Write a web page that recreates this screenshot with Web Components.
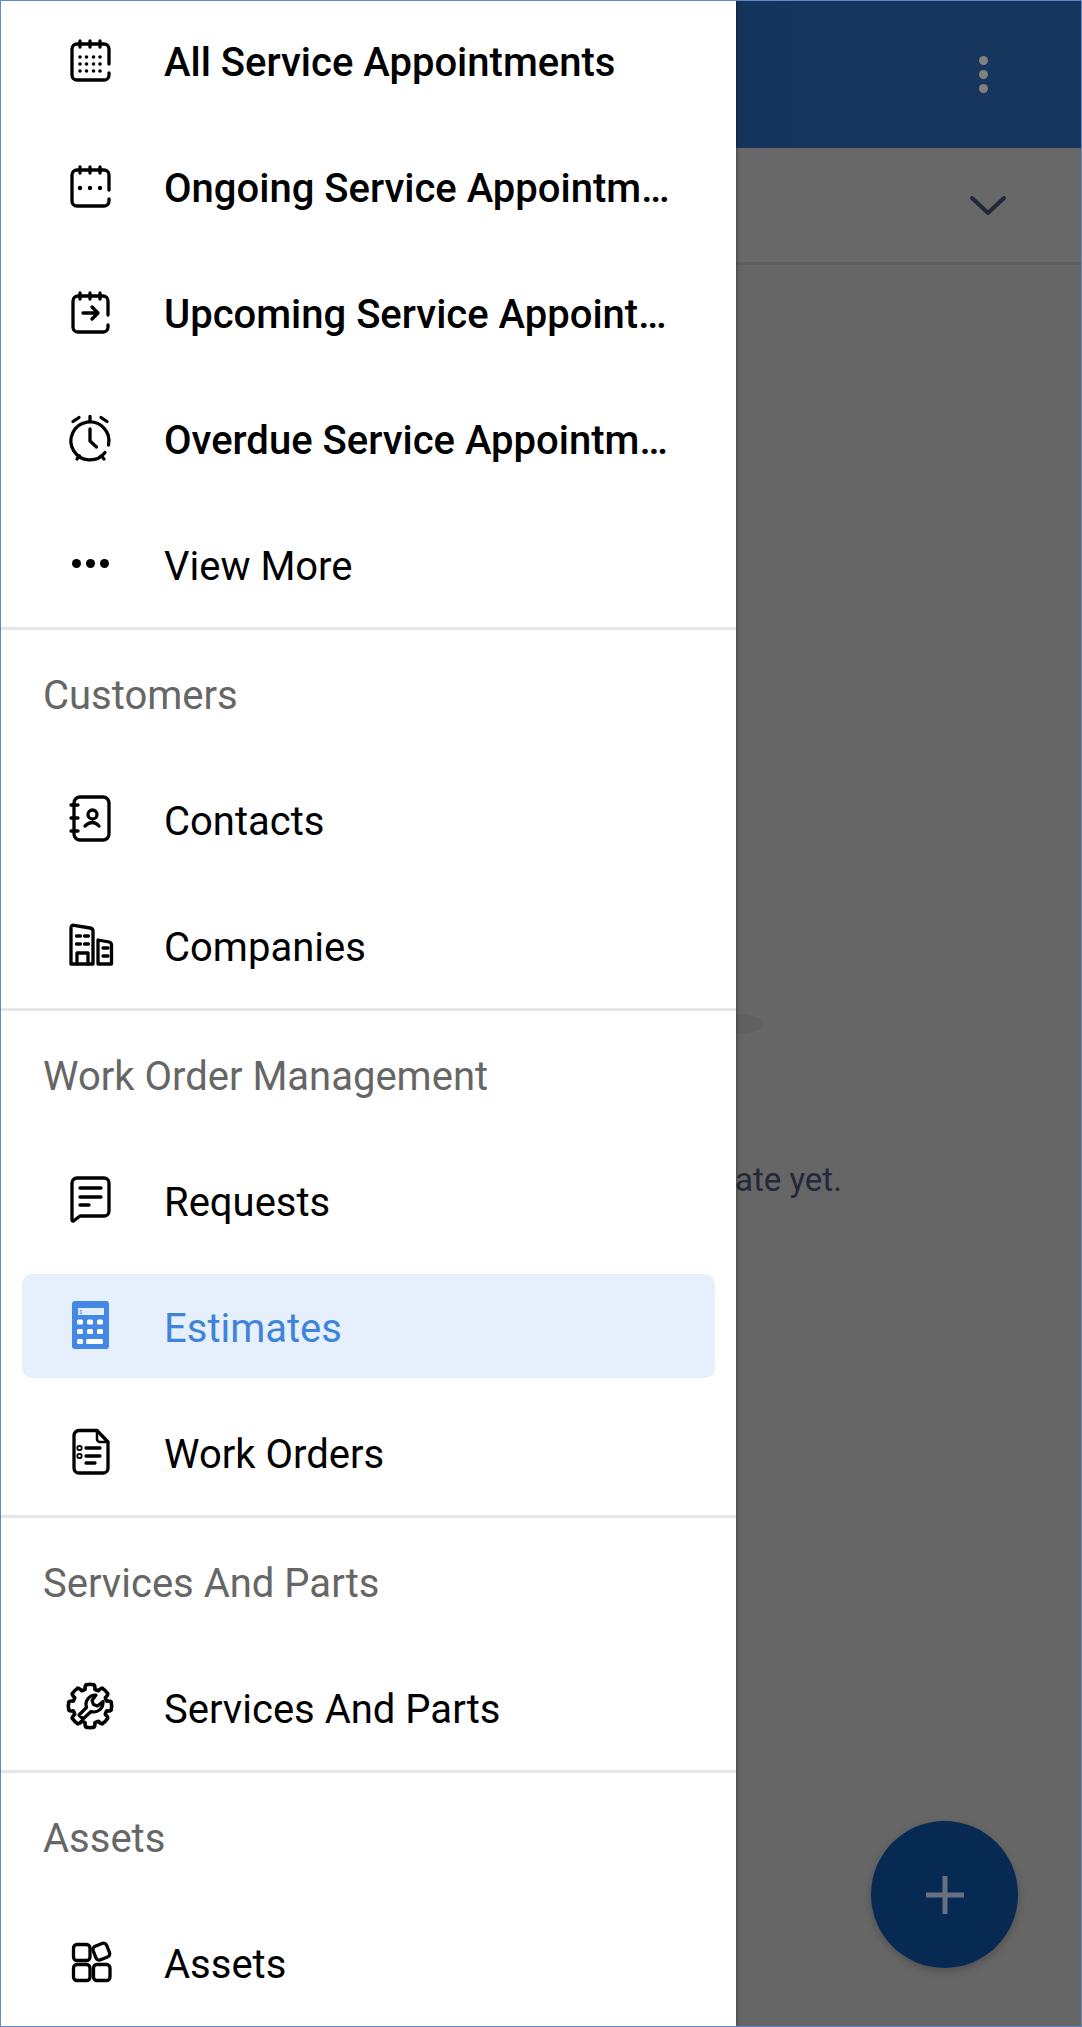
<!DOCTYPE html>
<html lang="en">
<head>
<meta charset="utf-8">
<title>Estimates</title>
<style>
    html, body { margin: 0; padding: 0; background: #fff; }
    body { font-family: Roboto, "Liberation Sans", sans-serif; }
</style>
</head>
<body>
<app-screen>
    <nav-drawer slot="drawer">
        <nav-section>
            <nav-item icon="calAll" strong>All Service Appointments</nav-item>
            <nav-item icon="calOngoing" strong>Ongoing Service Appointm…</nav-item>
            <nav-item icon="calUpcoming" strong>Upcoming Service Appoint…</nav-item>
            <nav-item icon="alarm" strong>Overdue Service Appointm…</nav-item>
            <nav-item icon="more">View More</nav-item>
        </nav-section>
        <nav-section heading="Customers">
            <nav-item icon="contacts">Contacts</nav-item>
            <nav-item icon="companies">Companies</nav-item>
        </nav-section>
        <nav-section heading="Work Order Management">
            <nav-item icon="requests">Requests</nav-item>
            <nav-item icon="calculator" active>Estimates</nav-item>
            <nav-item icon="workorders">Work Orders</nav-item>
        </nav-section>
        <nav-section heading="Services And Parts">
            <nav-item icon="gear">Services And Parts</nav-item>
        </nav-section>
        <nav-section heading="Assets" last>
            <nav-item icon="assets">Assets</nav-item>
        </nav-section>
    </nav-drawer>
    <main-panel slot="main">ate yet.</main-panel>
    <add-button slot="fab"></add-button>
</app-screen>

<script>
// gear outline with soft teeth, computed rather than typed by hand
function gearPath(cx, cy, outer, inner, teeth) {
    const step = Math.PI * 2 / teeth;
    const at = (r, t) => (cx + r * Math.cos(t)).toFixed(1) + ' ' + (cy + r * Math.sin(t)).toFixed(1);
    let d = 'M' + at(inner, -Math.PI / 2 - step * 0.36);
    for (let i = 0; i < teeth; i++) {
        const a = i * step - Math.PI / 2;
        d += 'Q' + at(outer + 1, a - step * 0.3) + ' ' + at(outer, a - step * 0.16);
        d += 'Q' + at(outer + 0.6, a) + ' ' + at(outer, a + step * 0.16);
        d += 'Q' + at(outer + 1, a + step * 0.3) + ' ' + at(inner, a + step * 0.36);
        d += 'Q' + at(inner - 0.6, a + step * 0.5) + ' ' + at(inner, a + step * 0.64);
    }
    return d + 'Z';
}

const calBody = `<path d="M43 28V13a5 5 0 0 0-5-5H11a5 5 0 0 0-5 5v26a5 5 0 0 0 5 5h27a5 5 0 0 0 5-5v-2"/><path d="M14 5v6M24 5v6M34 5v6"/>`;
const dot = (x, y, r = 1.8) => `<circle cx="${x}" cy="${y}" r="${r}" fill="currentColor" stroke="none"/>`;

const icons = {
    calAll: calBody + [21, 28, 35].map(y => [14, 20.5, 27.5, 34].map(x => dot(x, y)).join('')).join(''),
    calOngoing: calBody + [14, 24, 34].map(x => dot(x, 26, 2.2)).join(''),
    calUpcoming: `<path d="M42 27V13a5 5 0 0 0-5-5H12a5 5 0 0 0-5 5v26a5 5 0 0 0 5 5h25a5 5 0 0 0 5-5v-2"/><path d="M14 5v6M24 5v6M34 5v6"/><path d="M17 25h15M26 19l6 6-6 6"/>`,
    alarm: `<path d="M42.500 31A19 19 0 1 0 39 38.500"/><path d="M24 15v12l6.500 6"/><path d="M24 2.500v4M7 7.500l6-4M35 3.500l6 4M11 45l2.500-3M38 45l-2.500-3"/>`,
    more: [10.500, 24.500, 38.500].map(x => dot(x, 23.500, 4.500)).join(''),
    contacts: `<rect x="8" y="2" width="35" height="43" rx="6"/><path d="M5 10h7M5 23h7M5 36h7"/><circle cx="26.500" cy="19.500" r="4.500"/><path d="M19 31q7.500-7 14 0"/>`,
    companies: `<path d="M5 43V7q0-3 3-2.700L24 7q3 .5 3 3V43Z"/><path d="M11 43V32h11v11"/><path d="M10.500 15h4M18.500 15h4M10.500 23h4M18.500 23h4"/><path d="M32 43V19l11 2q2.500.5 2.500 3V43Z"/><path d="M37 27h5M37 35h5"/>`,
    requests: `<path d="M11 2h27a5 5 0 0 1 5 5v28a5 5 0 0 1-5 5H14l-6.500 5Q6 45.500 6 44V7a5 5 0 0 1 5-5Z"/><path d="M14 12h21M14 21h21M14 29h9"/>`,
    calculator: `<rect x="6" y="-1" width="37" height="48" rx="3" fill="currentColor" stroke="none"/><rect x="12" y="6" width="26" height="7" fill="#e3eefc" stroke="none"/><text x="13" y="12" font-family="Roboto" font-size="6" fill="#4a7fd0" stroke="none">$</text>`
        + [20, 29.500].map(y => [14, 24, 34].map(x => `<rect x="${x - 3}" y="${y - 2.500}" width="6" height="5" rx="1.500" fill="#fff" stroke="none"/>`).join('')).join('')
        + `<rect x="11" y="37" width="6" height="5" rx="1.500" fill="#fff" stroke="none"/><rect x="20" y="37" width="17" height="5" rx="1.500" fill="#fff" stroke="none"/>`,
    workorders: `<path d="M31 2.500H13a5 5 0 0 0-5 5V40a5 5 0 0 0 5 5h24a5 5 0 0 0 5-5V14Z"/><path d="M31 2.500V11a3 3 0 0 0 3 3h8" stroke-width="2.500"/><circle cx="13.500" cy="20" r="2.200" stroke-width="1.800"/><circle cx="13.500" cy="28" r="2.200" stroke-width="1.800"/><path d="M20 20h14M20 28h14M20 35h9"/>`,
    gear: `<path d="${gearPath(24, 23, 21.500, 17.500, 8)}" stroke-width="3.600"/><path d="M13 32 20.500 24.500c-2-6.500 2.500-12.500 9.500-12.500l-4 5.500 1.500 4 4 1.500 5.500-4.500c.5 7-5.500 12-12 10L17 36Z" stroke-width="3.200"/>`,
    assets: `<rect x="7.500" y="6.500" width="16.500" height="16" rx="3.500"/><rect x="7.500" y="26.500" width="16.500" height="16" rx="3.500"/><rect x="27.500" y="26.500" width="16.500" height="16" rx="3.500"/><rect x="28" y="6.500" width="14.500" height="14.500" rx="3.500" transform="rotate(-22 35 13.500)"/>`
};

const screenTemplate = document.createElement('template');
screenTemplate.innerHTML = `
<style>
    :host {
        display: flex;
        position: relative;
        box-sizing: border-box;
        width: 1082px;
        height: 2027px;
        border: 1px solid #6189c8;
        overflow: hidden;
        background: #686868;
    }
</style>
<slot name="drawer"></slot>
<slot name="main"></slot>
<slot name="fab"></slot>
`;
customElements.define('app-screen', class extends HTMLElement {
    constructor() {
        super();
        this.attachShadow({mode: 'open'}).appendChild(screenTemplate.content.cloneNode(true));
    }
});

const drawerTemplate = document.createElement('template');
drawerTemplate.innerHTML = `
<style>
    :host {
        display: block;
        flex: 0 0 735px;
        width: 735px;
        background: #fff;
        overflow: hidden;
        box-shadow: 1px 0 3px rgba(0,0,0,0.35);
        position: relative;
        z-index: 1;
    }
    .scroller { margin-top: -4px; }
</style>
<div class="scroller"><slot></slot></div>
`;
customElements.define('nav-drawer', class extends HTMLElement {
    constructor() {
        super();
        this.attachShadow({mode: 'open'}).appendChild(drawerTemplate.content.cloneNode(true));
    }
});

const sectionTemplate = document.createElement('template');
sectionTemplate.innerHTML = `
<style>
    :host {
        display: block;
        border-bottom: 3px solid #e6e6e6;
    }
    :host([last]) { border-bottom: 0; }
    .heading {
        display: none;
        box-sizing: border-box;
        height: 126px;
        padding: 5px 0 0 42px;
        font: 400 40px/121px Roboto, "Liberation Sans", sans-serif;
        color: #666;
    }
    :host([heading]) .heading { display: block; }
</style>
<div class="heading"></div>
<slot></slot>
`;
customElements.define('nav-section', class extends HTMLElement {
    constructor() {
        super();
        this.attachShadow({mode: 'open'}).appendChild(sectionTemplate.content.cloneNode(true));
        this.shadowRoot.querySelector('.heading').textContent = this.getAttribute('heading') || '';
    }
});

const itemTemplate = document.createElement('template');
itemTemplate.innerHTML = `
<style>
    :host {
        display: block;
        box-sizing: border-box;
        height: 126px;
        padding: 11px 21px;
        color: #000;
        font: 400 40px Roboto, "Liberation Sans", sans-serif;
    }
    :host([strong]) { font-weight: 500; }
    .row {
        display: flex;
        align-items: center;
        gap: 50px;
        height: 104px;
        padding: 0 40px 0 44px;
        border-radius: 10px;
    }
    :host([active]) .row {
        background: #e6f0fc;
        color: #3f84d9;
    }
    svg {
        flex: none;
        width: 48px;
        height: 48px;
        overflow: visible;
        fill: none;
        stroke: currentColor;
        stroke-width: 3.300;
        stroke-linecap: round;
        stroke-linejoin: round;
    }
    :host([active]) svg { color: #4488e6; }
    .label {
        flex: 1;
        min-width: 0;
        padding-top: 5px;
        white-space: nowrap;
    }
</style>
<div class="row">
    <svg viewBox="0 0 48 48"></svg>
    <span class="label"><slot></slot></span>
</div>
`;
customElements.define('nav-item', class extends HTMLElement {
    constructor() {
        super();
        this.attachShadow({mode: 'open'}).appendChild(itemTemplate.content.cloneNode(true));
        this.shadowRoot.querySelector('svg').innerHTML = icons[this.getAttribute('icon')] || '';
    }
});

const panelTemplate = document.createElement('template');
panelTemplate.innerHTML = `
<style>
    :host {
        display: flex;
        flex-direction: column;
        flex: 1;
        min-width: 0;
        overflow: hidden;
    }
    .header {
        height: 147px;
        flex: none;
        display: flex;
        align-items: center;
        justify-content: flex-end;
        padding-right: 93px;
        background: linear-gradient(90deg, #14335d, #17365d 20%);
    }
    .dots { display: flex; flex-direction: column; gap: 5px; }
    .dots i { width: 9px; height: 9px; border-radius: 50%; background: #808080; }
    .filter {
        box-sizing: border-box;
        height: 117px;
        flex: none;
        display: flex;
        align-items: center;
        justify-content: flex-end;
        padding: 2px 75px 0 0;
        background: #686868;
        border-bottom: 3px solid #5e5e5e;
    }
    .filter svg { width: 36px; height: 20px; fill: none; stroke: #22283a; stroke-width: 4; stroke-linecap: round; stroke-linejoin: round; }
    .empty { flex: 1; padding-top: 749px; background: #666; }
    .shadow { width: 28px; height: 20px; background: #606060; border-radius: 0 100% 100% 0 / 0 50% 50% 0; }
    .message {
        margin: 124px 0 0 -1px;
        font: 400 33px/44px Roboto, "Liberation Sans", sans-serif;
        color: #23283a;
    }
</style>
<div class="header"><div class="dots"><i></i><i></i><i></i></div></div>
<div class="filter"><svg viewBox="0 0 36 20"><path d="M2 2l16 15L34 2"/></svg></div>
<div class="empty">
    <div class="shadow"></div>
    <div class="message"><slot></slot></div>
</div>
`;
customElements.define('main-panel', class extends HTMLElement {
    constructor() {
        super();
        this.attachShadow({mode: 'open'}).appendChild(panelTemplate.content.cloneNode(true));
    }
});

const fabTemplate = document.createElement('template');
fabTemplate.innerHTML = `
<style>
    :host {
        position: absolute;
        right: 63px;
        bottom: 58px;
        width: 147px;
        height: 147px;
        display: flex;
        align-items: center;
        justify-content: center;
        border-radius: 50%;
        background: #072a52;
        box-shadow: 0 3px 8px rgba(0,0,0,0.22);
        z-index: 2;
    }
    svg { width: 38px; height: 38px; stroke: #667080; stroke-width: 5; }
</style>
<svg viewBox="0 0 38 38"><path d="M0 19h38M19 0v38"/></svg>
`;
customElements.define('add-button', class extends HTMLElement {
    constructor() {
        super();
        this.attachShadow({mode: 'open'}).appendChild(fabTemplate.content.cloneNode(true));
    }
});
</script>
</body>
</html>
